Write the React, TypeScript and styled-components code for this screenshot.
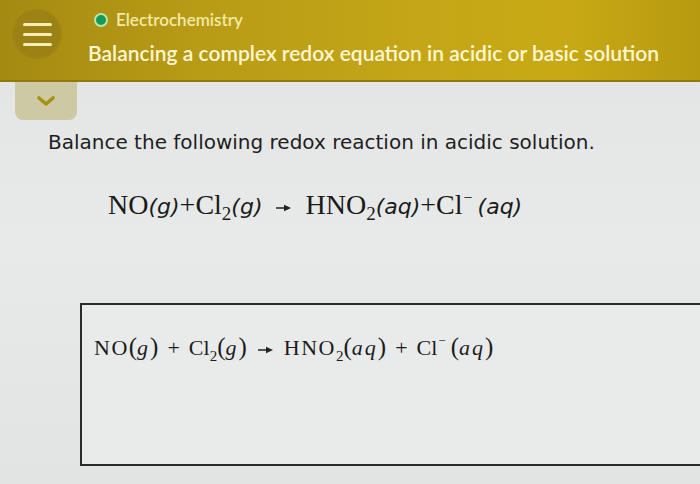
import styled, { createGlobalStyle } from 'styled-components';

const GlobalStyle = createGlobalStyle`
  html, body {
    margin: 0;
    padding: 0;
    width: 700px;
    height: 484px;
    overflow: hidden;
    background: #e4e6e6;
  }
`;

const Page = styled.div`
  width: 700px;
  height: 484px;
  overflow: hidden;
  display: flex;
  flex-direction: column;
  background: linear-gradient(180deg, #e2e4e3 0%, #e8eaea 50%, #e2e4e4 100%);
`;

const Header = styled.header`
  height: 82px;
  flex-shrink: 0;
  display: flex;
  align-items: flex-start;
  padding: 9px 0 0 12px;
  box-sizing: border-box;
  background: linear-gradient(90deg, #a48a12 0%, #b99c16 30%, #c4a617 60%, #c8a915 80%, #b89a10 100%);
  border-bottom: 2px solid #8f7a10;
  font-family: Lato, 'Open Sans', sans-serif;
`;

const MenuButton = styled.div`
  width: 50px;
  height: 50px;
  border-radius: 50%;
  background: radial-gradient(circle, #9c8214 60%, #a88d14 100%);
  display: flex;
  flex-direction: column;
  align-items: center;
  justify-content: center;
  gap: 7px;
  margin-right: 26px;
  span {
    display: block;
    width: 29px;
    height: 3px;
    border-radius: 2px;
    background: #f6efb2;
  }
`;

const Titles = styled.div`
  display: flex;
  flex-direction: column;
`;

const Topic = styled.div`
  display: flex;
  align-items: center;
  gap: 8px;
  margin-left: 6px;
  font-size: 17px;
  color: #f3eaa6;
  font-weight: 600;
  line-height: 22px;
`;

const Dot = styled.span`
  width: 10px;
  height: 10px;
  border-radius: 50%;
  background: #17985a;
  border: 2px solid #b6e8a8;
`;

const Title = styled.div`
  margin-top: 9px;
  font-size: 21px;
  font-weight: 600;
  color: #fff7d2;
  line-height: 26px;
`;

const Tab = styled.div`
  width: 62px;
  height: 38px;
  margin-left: 15px;
  flex-shrink: 0;
  background: #cdc9a4;
  border-radius: 0 0 8px 8px;
  display: flex;
  align-items: center;
  justify-content: center;
`;

const Question = styled.p`
  margin: 9px 0 0 48px;
  font-family: 'DejaVu Sans', Verdana, sans-serif;
  font-size: 20px;
  line-height: 26px;
  color: #1e1e1e;
`;

const Equation = styled.div`
  margin: 33px 0 0 108px;
  font-family: 'Liberation Serif', 'Times New Roman', serif;
  font-size: 28px;
  color: #1a1a1a;
  line-height: 34px;
  white-space: nowrap;
`;

const State = styled.span`
  font-family: 'DejaVu Sans', Verdana, sans-serif;
  font-style: italic;
  font-size: 22px;
`;

const Sub = styled.sub<{ $size?: number }>`
  font-size: ${({ $size }) => $size ?? 19}px;
  vertical-align: -6px;
  line-height: 0;
`;

const Sup = styled.sup<{ $size?: number; $rise?: number }>`
  font-size: ${({ $size }) => $size ?? 16}px;
  vertical-align: ${({ $rise }) => $rise ?? 11}px;
  line-height: 0;
  margin: 0 5px 0 1px;
`;

const Arrow = styled.svg<{ $gap: number }>`
  display: inline-block;
  vertical-align: middle;
  margin: 0 ${({ $gap }) => $gap}px;
`;

const AnswerBox = styled.div`
  margin: 79px -30px 0 80px;
  height: 163px;
  border: 2px solid #2a2a2a;
  background: #e9ebeb;
  box-sizing: border-box;
  padding: 27px 0 0 12px;
`;

const AnswerLine = styled.div`
  font-family: 'Liberation Serif', 'Times New Roman', serif;
  font-size: 22px;
  color: #1c1c1c;
  line-height: 30px;
  white-space: nowrap;
`;

const Caps = styled.span`
  letter-spacing: 1.5px;
`;

const Paren = styled.span`
  font-size: 25px;
`;

const Ital = styled.span`
  font-style: italic;
  letter-spacing: 2px;
`;

const Op = styled.span`
  margin: 0 9px;
`;

function SmallArrow({ gap }: { gap: number }) {
  return (
    <Arrow $gap={gap} width="15" height="8" viewBox="0 0 15 8">
      <line x1="0" y1="4" x2="9" y2="4" stroke="#222" strokeWidth="1.5" />
      <polygon points="8,0.8 15,4 8,7.2" fill="#222" />
    </Arrow>
  );
}

export default function App() {
  return (
    <>
      <GlobalStyle />
      <Page>
        <Header>
          <MenuButton>
            <span />
            <span />
            <span />
          </MenuButton>
          <Titles>
            <Topic>
              <Dot />
              Electrochemistry
            </Topic>
            <Title>Balancing a complex redox equation in acidic or basic solution</Title>
          </Titles>
        </Header>
        <Tab>
          <svg width="22" height="14" viewBox="0 0 22 14">
            <polyline points="4,4 11,10 18,4" fill="none" stroke="#a8900c" strokeWidth="3.6" strokeLinecap="round" strokeLinejoin="round" />
          </svg>
        </Tab>
        <Question>Balance the following redox reaction in acidic solution.</Question>
        <Equation>
          NO<State>(g)</State>+Cl<Sub>2</Sub>
          <State>(g)</State>
          <SmallArrow gap={14} />
          HNO<Sub>2</Sub>
          <State>(aq)</State>+Cl<Sup>−</Sup>
          <State>(aq)</State>
        </Equation>
        <AnswerBox>
          <AnswerLine>
            <Caps>NO</Caps>
            <Paren>(</Paren>
            <Ital>g</Ital>
            <Paren>)</Paren>
            <Op>+</Op>Cl<Sub $size={15}>2</Sub>
            <Paren>(</Paren>
            <Ital>g</Ital>
            <Paren>)</Paren>
            <SmallArrow gap={11} />
            <Caps>HNO</Caps>
            <Sub $size={15}>2</Sub>
            <Paren>(</Paren>
            <Ital>aq</Ital>
            <Paren>)</Paren>
            <Op>+</Op>Cl<Sup $size={13} $rise={10}>−</Sup>
            <Paren>(</Paren>
            <Ital>aq</Ital>
            <Paren>)</Paren>
          </AnswerLine>
        </AnswerBox>
      </Page>
    </>
  );
}
